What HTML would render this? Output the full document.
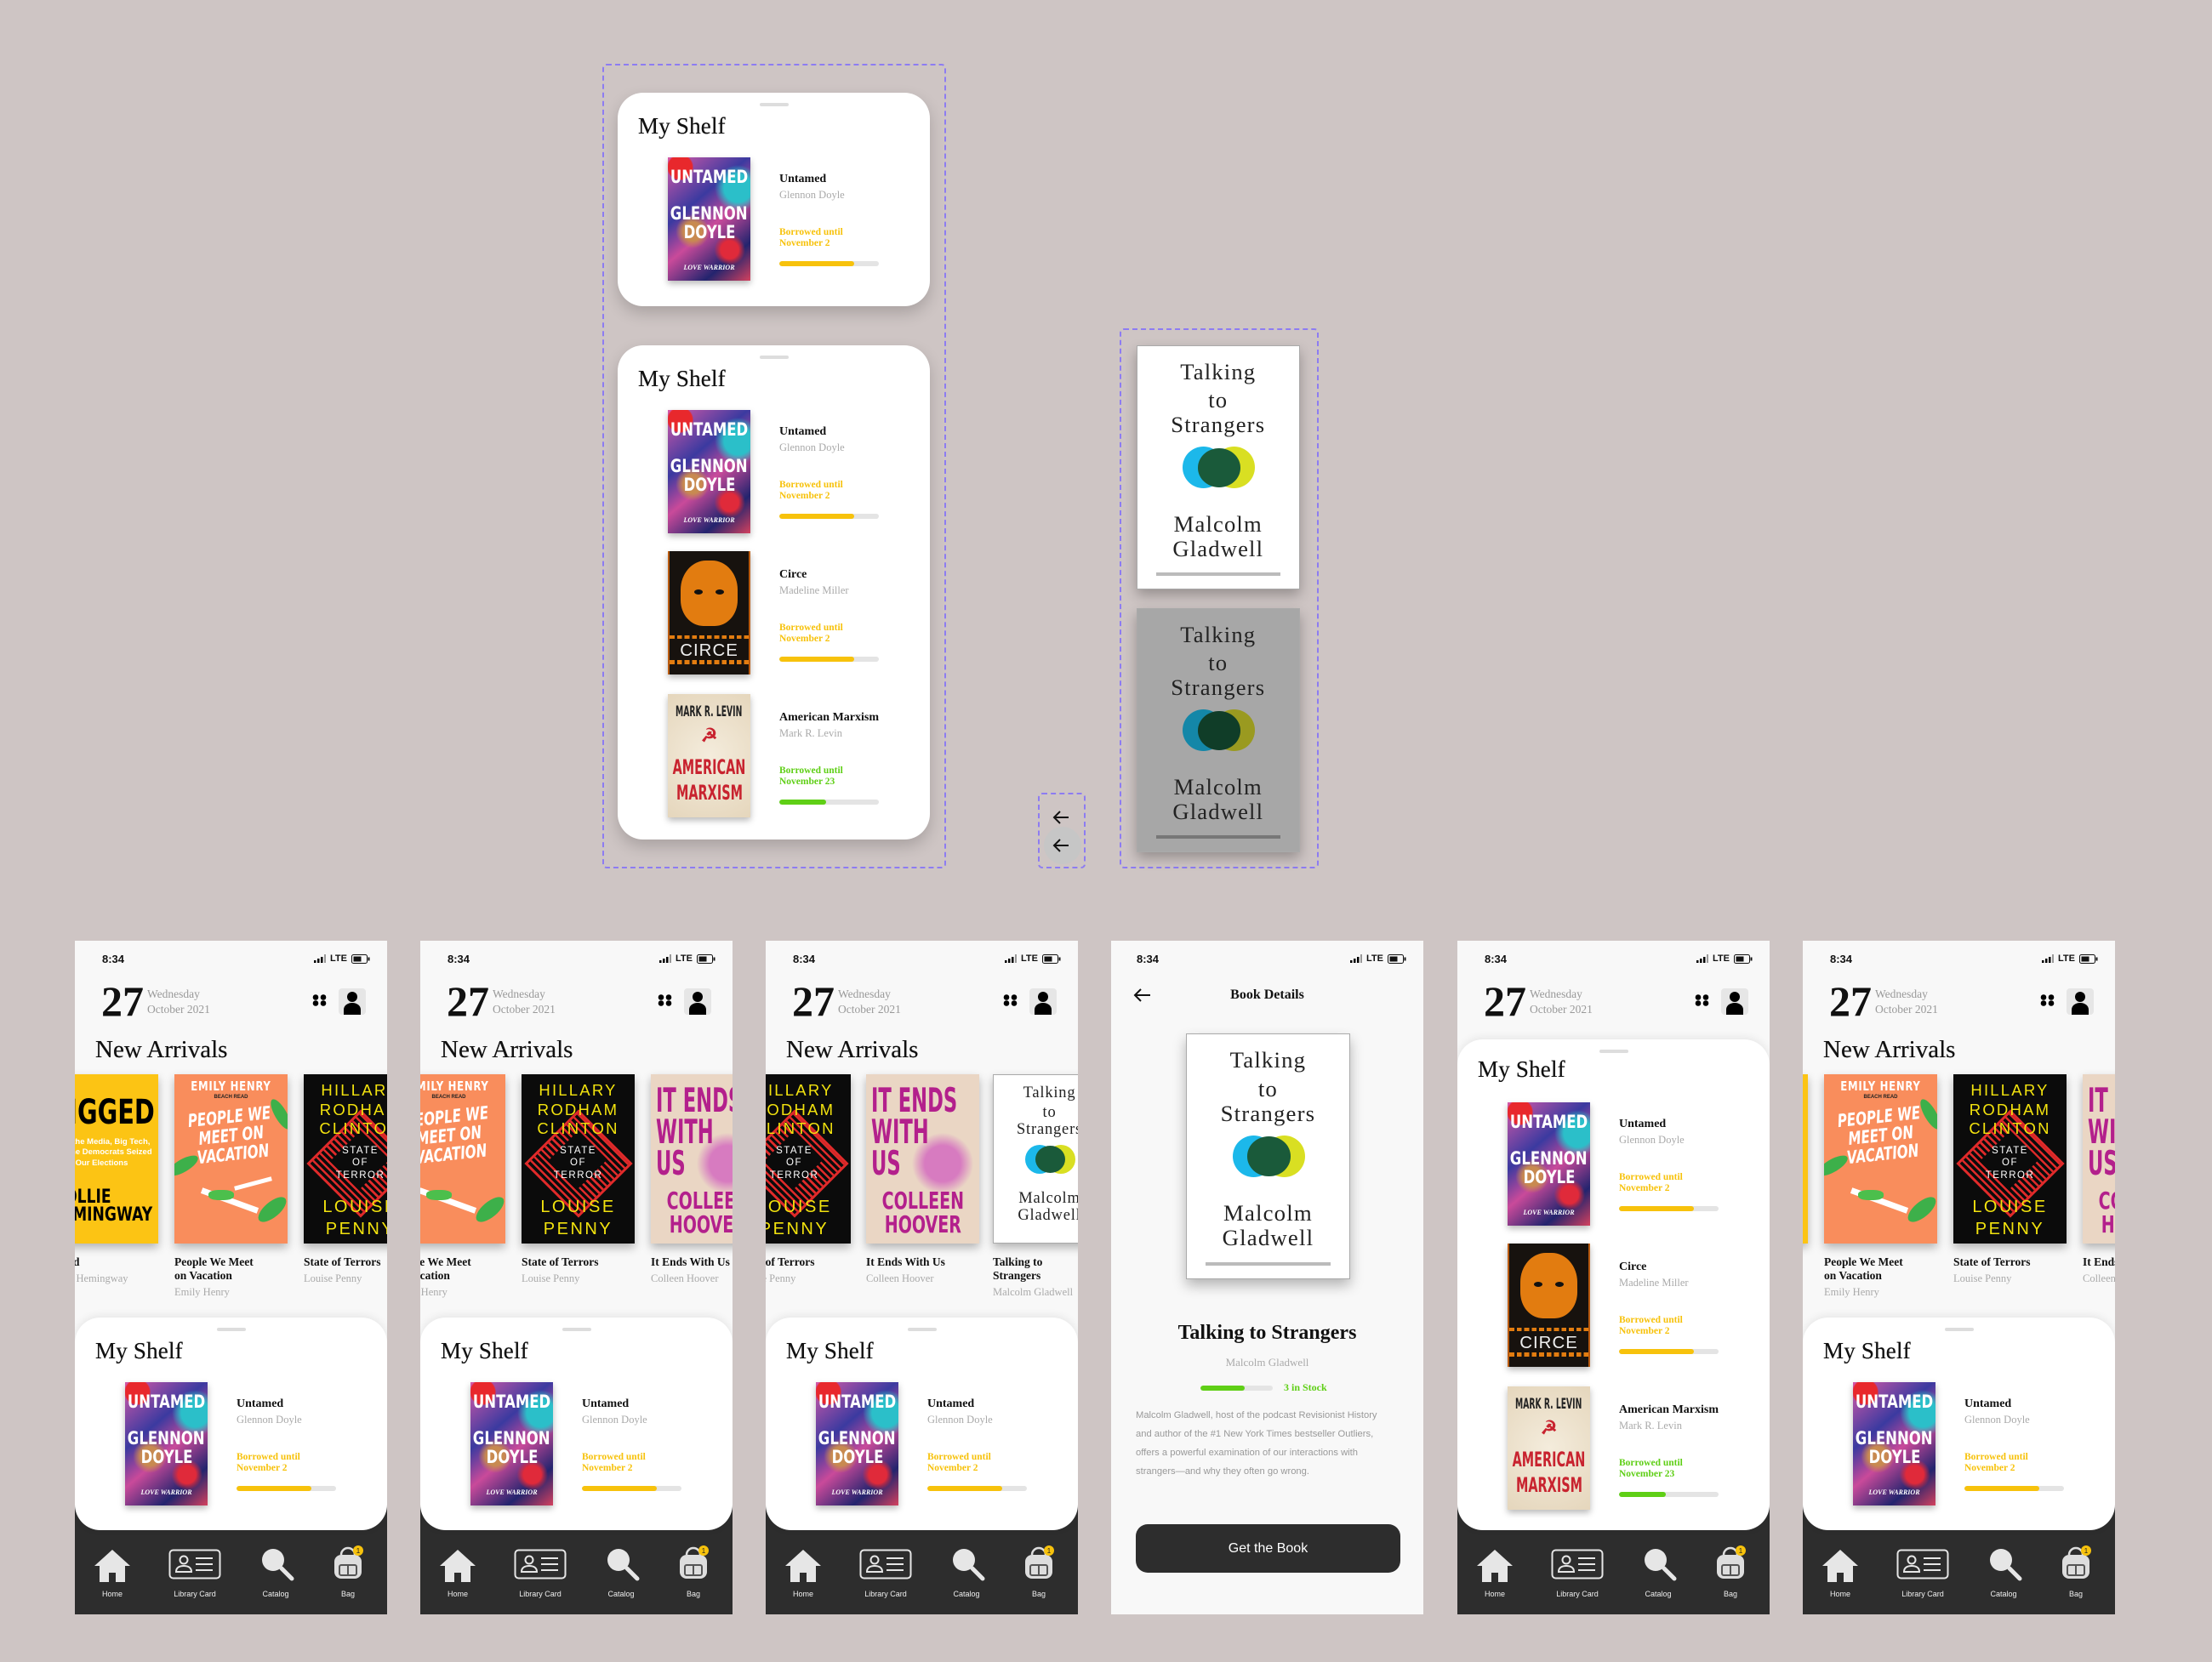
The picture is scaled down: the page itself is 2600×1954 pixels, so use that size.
<!DOCTYPE html>
<html><head><meta charset="utf-8"><style>
*{margin:0;padding:0;box-sizing:border-box}
body{width:2600px;height:1954px;background:#cec5c4;position:relative;overflow:hidden;font-family:"Liberation Serif",serif}
.abs{position:absolute}
.dash{position:absolute;border:2px dashed #8d7cf2;border-radius:5px}
.card{position:absolute;background:#fff;border-radius:30px;box-shadow:0 8px 18px rgba(0,0,0,.18);overflow:hidden}
.handle{position:absolute;top:12px;left:50%;margin-left:-17px;width:34px;height:4px;border-radius:2px;background:#ddd}
.h2{position:absolute;left:24px;font-size:27px;color:#111;top:24px;letter-spacing:.2px;text-shadow:0 0 .4px #111}
.st{position:absolute;left:190px;font-size:14px;font-weight:bold;color:#111}
.sa{position:absolute;left:190px;font-size:12.5px;color:#aaa}
.sb{position:absolute;left:190px;font-size:11.5px;line-height:12.5px;font-weight:bold;color:#f7c20c}
.sb.g{color:#5fcf16}
.bar{position:absolute;left:190px;width:117px;height:6px;border-radius:3px;background:#e4e4e4;overflow:hidden}
.bar i{display:block;height:100%;border-radius:3px;background:#f7c20c}
.bar.g i{background:#5fcf16}
.cv{position:absolute;width:13.3em;height:19.9em;overflow:hidden;box-shadow:0 .5em 1em rgba(0,0,0,.28)}
.cv div{position:absolute;left:0;right:0;text-align:center;white-space:nowrap;line-height:1}
.cv b{display:block}
.cv .cd{font-family:"DejaVu Sans","Liberation Sans",sans-serif;font-weight:bold;left:-60%;right:-60%}
.cv .cd b{display:inline-block;transform:scaleX(.78);transform-origin:center}
.cv .cd.l{left:.6em;right:auto;text-align:left}
.cv .cd.l b{transform-origin:left center}
.un{background:radial-gradient(circle at 15% 8%,#e8282c 0 9%,transparent 10%),radial-gradient(circle at 85% 25%,#2bbfc9 0 12%,transparent 20%),radial-gradient(circle at 30% 60%,#c88a50 0 10%,transparent 18%),radial-gradient(circle at 75% 75%,#e02a3a 0 8%,transparent 14%),linear-gradient(140deg,#d75aa8,#3b3aa0 35%,#c94a9a 55%,#23246e 80%,#d4415e)}
.un div{color:#fff}
.ci{background:#17120e;border-left:.4em solid #b85a10;border-right:.4em solid #b85a10}
.mx{background:radial-gradient(circle at 50% 50%,#f4ecdc,#e5d6bc)}
.pp{background:#f98d5c}
.hl{background:#0b0b0b}
.ie{background:#ead6c4}
.rg{background:#fcc414}
.tk{background:#fff;border:1px solid #aaa}
.tk div{font-family:"Liberation Serif",serif;color:#222;letter-spacing:.08em}
.phone{position:absolute;top:1106px;width:367px;height:792px;background:#f8f8f8;overflow:hidden}
.time{position:absolute;left:32px;top:14px;font:bold 13px "Liberation Sans",sans-serif;color:#111}
.sig{position:absolute;right:20px;top:15px;font:bold 11px "Liberation Sans",sans-serif;color:#111;display:flex;align-items:center;gap:5px}
.day{position:absolute;left:31px;top:42px;font-size:50px;font-weight:bold;color:#111}
.dt{position:absolute;left:85px;top:54px;font-size:13.5px;line-height:18px;color:#999}
.na{position:absolute;left:24px;top:112px;font-size:29px;color:#111;text-shadow:0 0 .4px #111}
.at{position:absolute;top:370px;font-size:13.5px;font-weight:bold;line-height:16px;color:#111;white-space:nowrap}
.at span{display:block;font-weight:normal;color:#aaa;font-size:12.5px;margin-top:3px}
.sheet{position:absolute;left:0;width:367px;background:#fff;border-radius:30px;box-shadow:0 -2px 10px rgba(0,0,0,.08)}
.nav{position:absolute;left:0;top:640px;width:367px;height:152px;background:#2d2d2d}
.nl{position:absolute;top:763px;font:9px "Liberation Sans",sans-serif;color:#eee;width:80px;margin-left:-40px;text-align:center}
</style></head><body>

<div class="dash" style="left:708px;top:75px;width:404px;height:946px"></div>
<div class="card" style="left:726px;top:109px;width:367px;height:251px">
 <div class="handle"></div><div class="h2">My Shelf</div>
 <div class="cv un" style="left:59px;top:76px;font-size:7.3px"><div class="cd" style="top:1.6em"><b style="font-size:2.9em">UNTAMED</b></div><div class="cd" style="top:7.6em"><b style="font-size:2.9em">GLENNON</b></div><div class="cd" style="top:10.5em"><b style="font-size:2.9em">DOYLE</b></div><div style="top:17.3em;font-style:italic"><b style="font-size:1.1em">LOVE WARRIOR</b></div></div>
 <div class="st" style="top:94px">Untamed</div><div class="sa" style="top:113px">Glennon Doyle</div>
 <div class="sb" style="top:158px">Borrowed until<br>November 2</div><div class="bar" style="top:198px"><i style="width:88px"></i></div>
</div>
<div class="card" style="left:726px;top:406px;width:367px;height:581px">
 <div class="handle"></div><div class="h2">My Shelf</div>
 <div class="cv un" style="left:59px;top:76px;font-size:7.3px"><div class="cd" style="top:1.6em"><b style="font-size:2.9em">UNTAMED</b></div><div class="cd" style="top:7.6em"><b style="font-size:2.9em">GLENNON</b></div><div class="cd" style="top:10.5em"><b style="font-size:2.9em">DOYLE</b></div><div style="top:17.3em;font-style:italic"><b style="font-size:1.1em">LOVE WARRIOR</b></div></div>
 <div class="st" style="top:94px">Untamed</div><div class="sa" style="top:113px">Glennon Doyle</div>
 <div class="sb" style="top:158px">Borrowed until<br>November 2</div><div class="bar" style="top:198px"><i style="width:88px"></i></div>

 <div class="cv ci" style="left:59px;top:242px;font-size:7.3px"><div style="top:1.5em;left:1.8em;right:1.8em;height:10.5em;background:#e27c10;border-radius:45% 45% 40% 40%"></div><div style="top:6.2em;left:4em;width:1.4em;height:.8em;background:#111;border-radius:50%"></div><div style="top:6.2em;left:7.4em;width:1.4em;height:.8em;background:#111;border-radius:50%"></div><div style="top:13.5em;height:.6em;background:repeating-linear-gradient(90deg,#e27c10 0 .8em,transparent .8em 1.2em)"></div><div style="top:14.6em;color:#eee;font-family:'Liberation Sans',sans-serif"><b style="font-size:2.8em;font-weight:normal;letter-spacing:.05em">CIRCE</b></div><div style="top:17.6em;height:.6em;background:repeating-linear-gradient(90deg,#e27c10 0 .8em,transparent .8em 1.2em)"></div></div>
 <div class="st" style="top:262px">Circe</div><div class="sa" style="top:281px">Madeline Miller</div>
 <div class="sb" style="top:326px">Borrowed until<br>November 2</div><div class="bar" style="top:366px"><i style="width:88px"></i></div>

 <div class="cv mx" style="left:59px;top:410px;font-size:7.3px"><div class="cd" style="top:1.6em;color:#222"><b style="font-size:2.3em;transform:scaleX(.55)">MARK R. LEVIN</b></div><div style="top:5.2em;color:#c8232f"><b style="font-size:3em">☭</b></div><div class="cd" style="top:10.2em;color:#c8232f"><b style="font-size:3.3em;transform:scaleX(.6)">AMERICAN</b></div><div class="cd" style="top:14.2em;color:#c8232f"><b style="font-size:3.3em;transform:scaleX(.6)">MARXISM</b></div></div>
 <div class="st" style="top:430px">American Marxism</div><div class="sa" style="top:449px">Mark R. Levin</div>
 <div class="sb g" style="top:494px">Borrowed until<br>November 23</div><div class="bar g" style="top:534px"><i style="width:55px"></i></div>
</div>

<div class="dash" style="left:1220px;top:932px;width:56px;height:89px"></div>
<div class="abs" style="left:1227px;top:972px;width:44px;height:44px;border-radius:50%;background:#c6c6c6"></div>
<svg class="abs" style="left:1236px;top:951px" width="22" height="20" viewBox="0 0 22 20"><path d="M20 10H3M10 3L3 10l7 7" fill="none" stroke="#111" stroke-width="2"/></svg>
<svg class="abs" style="left:1236px;top:984px" width="22" height="20" viewBox="0 0 22 20"><path d="M20 10H3M10 3L3 10l7 7" fill="none" stroke="#111" stroke-width="2"/></svg>

<div class="dash" style="left:1316px;top:386px;width:234px;height:635px"></div>
<div class="cv tk" style="left:1336px;top:406px;font-size:14.4px"><div style="top:1.2em"><b style="font-size:1.85em;font-weight:normal">Talking</b></div><div style="top:3.5em"><b style="font-size:1.85em;font-weight:normal">to</b></div><div style="top:5.5em"><b style="font-size:1.85em;font-weight:normal">Strangers</b></div><div style="top:8.2em;left:3.7em;width:3.4em;height:3.4em;border-radius:50%;background:#1cb8ea"></div><div style="top:8.2em;left:6.2em;width:3.4em;height:3.4em;border-radius:50%;background:#d9df22"></div><div style="top:8.3em;left:4.9em;width:3.5em;height:3.2em;border-radius:50%;background:#1a5a3a"></div><div style="top:13.6em"><b style="font-size:1.85em;font-weight:normal">Malcolm</b></div><div style="top:15.6em"><b style="font-size:1.85em;font-weight:normal">Gladwell</b></div><div style="top:18.5em;left:1.5em;right:1.5em;height:.25em;background:#bbb"></div></div>
<div class="cv tk" style="left:1336px;top:715px;font-size:14.4px;background:#a7a7a7"><div style="top:1.2em"><b style="font-size:1.85em;font-weight:normal">Talking</b></div><div style="top:3.5em"><b style="font-size:1.85em;font-weight:normal">to</b></div><div style="top:5.5em"><b style="font-size:1.85em;font-weight:normal">Strangers</b></div><div style="top:8.2em;left:3.7em;width:3.4em;height:3.4em;border-radius:50%;background:#1487a8"></div><div style="top:8.2em;left:6.2em;width:3.4em;height:3.4em;border-radius:50%;background:#9a9a20"></div><div style="top:8.3em;left:4.9em;width:3.5em;height:3.2em;border-radius:50%;background:#103d28"></div><div style="top:13.6em"><b style="font-size:1.85em;font-weight:normal">Malcolm</b></div><div style="top:15.6em"><b style="font-size:1.85em;font-weight:normal">Gladwell</b></div><div style="top:18.5em;left:1.5em;right:1.5em;height:.25em;background:#777"></div></div>

<!-- Phone 1 -->
<div class="phone" style="left:88px">
 <div class="time">8:34</div>
 <div class="sig"><svg width="14" height="10"><rect x="0" y="7" width="2.5" height="3"/><rect x="4" y="5" width="2.5" height="5"/><rect x="8" y="3" width="2.5" height="7"/><rect x="12" y="0" width="2" height="10" fill="#999"/></svg>LTE<svg width="22" height="11"><rect x=".5" y=".5" width="18" height="10" rx="2" fill="none" stroke="#111"/><rect x="2.5" y="2.5" width="9" height="6" fill="#111"/><rect x="19.5" y="3.5" width="2" height="4" fill="#111"/></svg></div>
 <div class="day">27</div><div class="dt">Wednesday<br>October 2021</div>
 <svg class="abs" style="left:279px;top:63px" width="17" height="14"><circle cx="4" cy="3.5" r="3.3"/><circle cx="13" cy="3.5" r="3.3"/><circle cx="4" cy="10.5" r="3.3"/><circle cx="13" cy="10.5" r="3.3"/></svg>
 <div class="abs" style="left:310px;top:56px;width:32px;height:31px;background:#e6e6e6;border-radius:4px"><svg width="32" height="31"><circle cx="16" cy="10" r="6"/><path d="M6 31v-6c0-5 5-8 10-8s10 3 10 8v6z"/></svg></div>
 <div class="na">New Arrivals</div>

 <div class="cv rg" style="left:-35px;top:157px;font-size:10px"><div class="cd" style="top:2.5em"><b style="font-size:4em;transform:scaleX(.72)">RIGGED</b></div><div style="top:7.4em;color:#fff;font-family:'Liberation Sans',sans-serif;line-height:1.3"><b style="font-size:.95em;font-weight:bold">How the Media, Big Tech,<br>and the Democrats Seized<br>Our Elections</b></div><div class="cd l" style="top:13.5em"><b style="font-size:2.2em;line-height:.95;transform:scaleX(.78)">MOLLIE<br>HEMINGWAY</b></div></div>
 <div class="at" style="left:-35px">Rigged<span>Mollie Hemingway</span></div>

 <div class="cv pp" style="left:117px;top:157px;font-size:10px"><div class="cd" style="top:.7em;color:#fff"><b style="font-size:1.5em;letter-spacing:.06em">EMILY HENRY</b></div><div style="top:2.4em;color:#222;font-family:'Liberation Sans',sans-serif"><b style="font-size:.6em">BEACH READ</b></div><div class="cd" style="top:3.9em;color:#fff;font-style:italic;line-height:1.05"><b style="font-size:2.1em;transform:rotate(-6deg) scaleX(.72)">PEOPLE WE<br>MEET ON<br>VACATION</b></div><div style="top:10em;left:-1em;width:4em;height:1.5em;background:#3db04a;border-radius:50%;transform:rotate(-30deg)"></div><div style="top:4em;left:10.5em;width:4em;height:1.4em;background:#3db04a;border-radius:50%;transform:rotate(60deg)"></div><div style="top:14.5em;left:3em;width:7em;height:.7em;background:#fff;transform:rotate(20deg)"></div><div style="top:13.6em;left:4em;width:3em;height:1.2em;background:#4cbf4c;border-radius:40%"></div><div style="top:12.6em;left:7em;width:4.5em;height:.5em;background:#fff;transform:rotate(-15deg)"></div><div style="top:15em;left:9.5em;width:4em;height:1.8em;background:#3db04a;border-radius:50%;transform:rotate(-40deg)"></div></div>
 <div class="at" style="left:117px">People We Meet<br>on Vacation<span>Emily Henry</span></div>

 <div class="cv hl" style="left:269px;top:157px;font-size:10px"><div style="top:6em;left:2.2em;width:9em;height:9em;transform:rotate(45deg);background:repeating-linear-gradient(0deg,transparent 0 .35em,#e02a2a .35em .6em);border:.3em solid #e02a2a"></div><div style="top:7.6em;left:4.3em;width:4.8em;height:4.8em;transform:rotate(45deg);background:#0b0b0b"></div><div style="top:.8em;color:#f2e20e;font-family:'Liberation Sans',sans-serif;line-height:1.22;letter-spacing:.22em"><b style="font-size:1.85em;font-weight:normal">HILLARY<br>RODHAM<br>CLINTON</b></div><div style="top:8.3em;color:#fff;font-family:'Liberation Sans',sans-serif;line-height:1.25;letter-spacing:.15em"><b style="font-size:1.15em;font-weight:normal">STATE<br>OF<br>TERROR</b></div><div style="top:14.3em;color:#f2e20e;font-family:'Liberation Sans',sans-serif;line-height:1.3;letter-spacing:.25em"><b style="font-size:2em;font-weight:normal">LOUISE<br>PENNY</b></div></div>
 <div class="at" style="left:269px">State of Terrors<span>Louise Penny</span></div>

 <div class="nav"></div>
 <div class="sheet" style="top:443px;height:250px">
  <div class="handle"></div><div class="h2">My Shelf</div>
  <div class="cv un" style="left:59px;top:76px;font-size:7.3px"><div class="cd" style="top:1.6em"><b style="font-size:2.9em">UNTAMED</b></div><div class="cd" style="top:7.6em"><b style="font-size:2.9em">GLENNON</b></div><div class="cd" style="top:10.5em"><b style="font-size:2.9em">DOYLE</b></div><div style="top:17.3em;font-style:italic"><b style="font-size:1.1em">LOVE WARRIOR</b></div></div>
  <div class="st" style="top:94px">Untamed</div><div class="sa" style="top:113px">Glennon Doyle</div>
  <div class="sb" style="top:158px">Borrowed until<br>November 2</div><div class="bar" style="top:198px"><i style="width:88px"></i></div>
 </div>
 <svg class="abs" style="left:21px;top:714px" width="46" height="42" viewBox="0 0 46 42"><path d="M23 2L2 21h6v19h11V29h8v11h11V21h6z" fill="#e6e6e6"/></svg>
 <svg class="abs" style="left:110px;top:715px" width="62" height="36" viewBox="0 0 62 36"><rect x="1.5" y="1.5" width="59" height="33" rx="4" fill="none" stroke="#e6e6e6" stroke-width="2"/><circle cx="18" cy="13" r="4.5" fill="none" stroke="#e6e6e6" stroke-width="2"/><path d="M9 27c0-5 4-7 9-7s9 2 9 7z" fill="none" stroke="#e6e6e6" stroke-width="2"/><path d="M32 11h20M32 18h20M32 25h20" stroke="#e6e6e6" stroke-width="2"/></svg>
 <svg class="abs" style="left:218px;top:713px" width="40" height="42" viewBox="0 0 40 42"><circle cx="15" cy="15" r="13" fill="#e6e6e6"/><path d="M25 25l12 12" stroke="#e6e6e6" stroke-width="5" stroke-linecap="round"/></svg>
 <svg class="abs" style="left:300px;top:710px" width="42" height="44" viewBox="0 0 42 44"><path d="M13 12a8 8 0 0 1 16 0" fill="none" stroke="#ddd" stroke-width="2.5"/><rect x="5" y="12" width="32" height="28" rx="8" fill="#ddd"/><rect x="11" y="24" width="20" height="12" rx="2" fill="none" stroke="#555" stroke-width="2"/><path d="M21 24v12" stroke="#555" stroke-width="2"/><circle cx="33" cy="7" r="6" fill="#f7c20c"/><text x="33" y="10" font-size="8" text-anchor="middle" font-family="Liberation Sans" fill="#222">1</text></svg>
 <div class="nl" style="left:44px">Home</div><div class="nl" style="left:141px">Library Card</div><div class="nl" style="left:236px">Catalog</div><div class="nl" style="left:321px">Bag</div>
</div>

<!-- Phone 2 -->
<div class="phone" style="left:494px">
 <div class="time">8:34</div>
 <div class="sig"><svg width="14" height="10"><rect x="0" y="7" width="2.5" height="3"/><rect x="4" y="5" width="2.5" height="5"/><rect x="8" y="3" width="2.5" height="7"/><rect x="12" y="0" width="2" height="10" fill="#999"/></svg>LTE<svg width="22" height="11"><rect x=".5" y=".5" width="18" height="10" rx="2" fill="none" stroke="#111"/><rect x="2.5" y="2.5" width="9" height="6" fill="#111"/><rect x="19.5" y="3.5" width="2" height="4" fill="#111"/></svg></div>
 <div class="day">27</div><div class="dt">Wednesday<br>October 2021</div>
 <svg class="abs" style="left:279px;top:63px" width="17" height="14"><circle cx="4" cy="3.5" r="3.3"/><circle cx="13" cy="3.5" r="3.3"/><circle cx="4" cy="10.5" r="3.3"/><circle cx="13" cy="10.5" r="3.3"/></svg>
 <div class="abs" style="left:310px;top:56px;width:32px;height:31px;background:#e6e6e6;border-radius:4px"><svg width="32" height="31"><circle cx="16" cy="10" r="6"/><path d="M6 31v-6c0-5 5-8 10-8s10 3 10 8v6z"/></svg></div>
 <div class="na">New Arrivals</div>

 <div class="cv pp" style="left:-33px;top:157px;font-size:10px"><div class="cd" style="top:.7em;color:#fff"><b style="font-size:1.5em;letter-spacing:.06em">EMILY HENRY</b></div><div style="top:2.4em;color:#222;font-family:'Liberation Sans',sans-serif"><b style="font-size:.6em">BEACH READ</b></div><div class="cd" style="top:3.9em;color:#fff;font-style:italic;line-height:1.05"><b style="font-size:2.1em;transform:rotate(-6deg) scaleX(.72)">PEOPLE WE<br>MEET ON<br>VACATION</b></div><div style="top:10em;left:-1em;width:4em;height:1.5em;background:#3db04a;border-radius:50%;transform:rotate(-30deg)"></div><div style="top:14.5em;left:3em;width:7em;height:.7em;background:#fff;transform:rotate(20deg)"></div><div style="top:13.6em;left:4em;width:3em;height:1.2em;background:#4cbf4c;border-radius:40%"></div><div style="top:15em;left:9.5em;width:4em;height:1.8em;background:#3db04a;border-radius:50%;transform:rotate(-40deg)"></div></div>
 <div class="at" style="left:-33px">People We Meet<br>on Vacation<span>Emily Henry</span></div>

 <div class="cv hl" style="left:119px;top:157px;font-size:10px"><div style="top:6em;left:2.2em;width:9em;height:9em;transform:rotate(45deg);background:repeating-linear-gradient(0deg,transparent 0 .35em,#e02a2a .35em .6em);border:.3em solid #e02a2a"></div><div style="top:7.6em;left:4.3em;width:4.8em;height:4.8em;transform:rotate(45deg);background:#0b0b0b"></div><div style="top:.8em;color:#f2e20e;font-family:'Liberation Sans',sans-serif;line-height:1.22;letter-spacing:.22em"><b style="font-size:1.85em;font-weight:normal">HILLARY<br>RODHAM<br>CLINTON</b></div><div style="top:8.3em;color:#fff;font-family:'Liberation Sans',sans-serif;line-height:1.25;letter-spacing:.15em"><b style="font-size:1.15em;font-weight:normal">STATE<br>OF<br>TERROR</b></div><div style="top:14.3em;color:#f2e20e;font-family:'Liberation Sans',sans-serif;line-height:1.3;letter-spacing:.25em"><b style="font-size:2em;font-weight:normal">LOUISE<br>PENNY</b></div></div>
 <div class="at" style="left:119px">State of Terrors<span>Louise Penny</span></div>

 <div class="cv ie" style="left:271px;top:157px;font-size:10px"><div style="top:6em;left:5em;width:8em;height:9em;background:radial-gradient(circle,#d77bc0 0 35%,transparent 60%)"></div><div class="cd l" style="top:1.3em;color:#b3208c;line-height:.95"><b style="font-size:3.9em;transform:scaleX(.58)">IT ENDS<br>WITH<br>US</b></div><div class="cd" style="top:13.5em;color:#b3208c;line-height:1"><b style="font-size:2.8em;transform:scaleX(.68)">COLLEEN<br>HOOVER</b></div></div>
 <div class="at" style="left:271px">It Ends With Us<span>Colleen Hoover</span></div>

 <div class="nav"></div>
 <div class="sheet" style="top:443px;height:250px">
  <div class="handle"></div><div class="h2">My Shelf</div>
  <div class="cv un" style="left:59px;top:76px;font-size:7.3px"><div class="cd" style="top:1.6em"><b style="font-size:2.9em">UNTAMED</b></div><div class="cd" style="top:7.6em"><b style="font-size:2.9em">GLENNON</b></div><div class="cd" style="top:10.5em"><b style="font-size:2.9em">DOYLE</b></div><div style="top:17.3em;font-style:italic"><b style="font-size:1.1em">LOVE WARRIOR</b></div></div>
  <div class="st" style="top:94px">Untamed</div><div class="sa" style="top:113px">Glennon Doyle</div>
  <div class="sb" style="top:158px">Borrowed until<br>November 2</div><div class="bar" style="top:198px"><i style="width:88px"></i></div>
 </div>
 <svg class="abs" style="left:21px;top:714px" width="46" height="42" viewBox="0 0 46 42"><path d="M23 2L2 21h6v19h11V29h8v11h11V21h6z" fill="#e6e6e6"/></svg>
 <svg class="abs" style="left:110px;top:715px" width="62" height="36" viewBox="0 0 62 36"><rect x="1.5" y="1.5" width="59" height="33" rx="4" fill="none" stroke="#e6e6e6" stroke-width="2"/><circle cx="18" cy="13" r="4.5" fill="none" stroke="#e6e6e6" stroke-width="2"/><path d="M9 27c0-5 4-7 9-7s9 2 9 7z" fill="none" stroke="#e6e6e6" stroke-width="2"/><path d="M32 11h20M32 18h20M32 25h20" stroke="#e6e6e6" stroke-width="2"/></svg>
 <svg class="abs" style="left:218px;top:713px" width="40" height="42" viewBox="0 0 40 42"><circle cx="15" cy="15" r="13" fill="#e6e6e6"/><path d="M25 25l12 12" stroke="#e6e6e6" stroke-width="5" stroke-linecap="round"/></svg>
 <svg class="abs" style="left:300px;top:710px" width="42" height="44" viewBox="0 0 42 44"><path d="M13 12a8 8 0 0 1 16 0" fill="none" stroke="#ddd" stroke-width="2.5"/><rect x="5" y="12" width="32" height="28" rx="8" fill="#ddd"/><rect x="11" y="24" width="20" height="12" rx="2" fill="none" stroke="#555" stroke-width="2"/><path d="M21 24v12" stroke="#555" stroke-width="2"/><circle cx="33" cy="7" r="6" fill="#f7c20c"/><text x="33" y="10" font-size="8" text-anchor="middle" font-family="Liberation Sans" fill="#222">1</text></svg>
 <div class="nl" style="left:44px">Home</div><div class="nl" style="left:141px">Library Card</div><div class="nl" style="left:236px">Catalog</div><div class="nl" style="left:321px">Bag</div>
</div>

<!-- Phone 3 -->
<div class="phone" style="left:900px">
 <div class="time">8:34</div>
 <div class="sig"><svg width="14" height="10"><rect x="0" y="7" width="2.5" height="3"/><rect x="4" y="5" width="2.5" height="5"/><rect x="8" y="3" width="2.5" height="7"/><rect x="12" y="0" width="2" height="10" fill="#999"/></svg>LTE<svg width="22" height="11"><rect x=".5" y=".5" width="18" height="10" rx="2" fill="none" stroke="#111"/><rect x="2.5" y="2.5" width="9" height="6" fill="#111"/><rect x="19.5" y="3.5" width="2" height="4" fill="#111"/></svg></div>
 <div class="day">27</div><div class="dt">Wednesday<br>October 2021</div>
 <svg class="abs" style="left:279px;top:63px" width="17" height="14"><circle cx="4" cy="3.5" r="3.3"/><circle cx="13" cy="3.5" r="3.3"/><circle cx="4" cy="10.5" r="3.3"/><circle cx="13" cy="10.5" r="3.3"/></svg>
 <div class="abs" style="left:310px;top:56px;width:32px;height:31px;background:#e6e6e6;border-radius:4px"><svg width="32" height="31"><circle cx="16" cy="10" r="6"/><path d="M6 31v-6c0-5 5-8 10-8s10 3 10 8v6z"/></svg></div>
 <div class="na">New Arrivals</div>

 <div class="cv hl" style="left:-33px;top:157px;font-size:10px"><div style="top:6em;left:2.2em;width:9em;height:9em;transform:rotate(45deg);background:repeating-linear-gradient(0deg,transparent 0 .35em,#e02a2a .35em .6em);border:.3em solid #e02a2a"></div><div style="top:7.6em;left:4.3em;width:4.8em;height:4.8em;transform:rotate(45deg);background:#0b0b0b"></div><div style="top:.8em;color:#f2e20e;font-family:'Liberation Sans',sans-serif;line-height:1.22;letter-spacing:.22em"><b style="font-size:1.85em;font-weight:normal">HILLARY<br>RODHAM<br>CLINTON</b></div><div style="top:8.3em;color:#fff;font-family:'Liberation Sans',sans-serif;line-height:1.25;letter-spacing:.15em"><b style="font-size:1.15em;font-weight:normal">STATE<br>OF<br>TERROR</b></div><div style="top:14.3em;color:#f2e20e;font-family:'Liberation Sans',sans-serif;line-height:1.3;letter-spacing:.25em"><b style="font-size:2em;font-weight:normal">LOUISE<br>PENNY</b></div></div>
 <div class="at" style="left:-33px">State of Terrors<span>Louise Penny</span></div>

 <div class="cv ie" style="left:118px;top:157px;font-size:10px"><div style="top:6em;left:5em;width:8em;height:9em;background:radial-gradient(circle,#d77bc0 0 35%,transparent 60%)"></div><div class="cd l" style="top:1.3em;color:#b3208c;line-height:.95"><b style="font-size:3.9em;transform:scaleX(.58)">IT ENDS<br>WITH<br>US</b></div><div class="cd" style="top:13.5em;color:#b3208c;line-height:1"><b style="font-size:2.8em;transform:scaleX(.68)">COLLEEN<br>HOOVER</b></div></div>
 <div class="at" style="left:118px">It Ends With Us<span>Colleen Hoover</span></div>

 <div class="cv tk" style="left:267px;top:157px;font-size:10px"><div style="top:1.2em"><b style="font-size:1.85em;font-weight:normal">Talking</b></div><div style="top:3.5em"><b style="font-size:1.85em;font-weight:normal">to</b></div><div style="top:5.5em"><b style="font-size:1.85em;font-weight:normal">Strangers</b></div><div style="top:8.2em;left:3.7em;width:3.4em;height:3.4em;border-radius:50%;background:#1cb8ea"></div><div style="top:8.2em;left:6.2em;width:3.4em;height:3.4em;border-radius:50%;background:#d9df22"></div><div style="top:8.3em;left:4.9em;width:3.5em;height:3.2em;border-radius:50%;background:#1a5a3a"></div><div style="top:13.6em"><b style="font-size:1.85em;font-weight:normal">Malcolm</b></div><div style="top:15.6em"><b style="font-size:1.85em;font-weight:normal">Gladwell</b></div></div>
 <div class="at" style="left:267px">Talking to<br>Strangers<span>Malcolm Gladwell</span></div>

 <div class="nav"></div>
 <div class="sheet" style="top:443px;height:250px">
  <div class="handle"></div><div class="h2">My Shelf</div>
  <div class="cv un" style="left:59px;top:76px;font-size:7.3px"><div class="cd" style="top:1.6em"><b style="font-size:2.9em">UNTAMED</b></div><div class="cd" style="top:7.6em"><b style="font-size:2.9em">GLENNON</b></div><div class="cd" style="top:10.5em"><b style="font-size:2.9em">DOYLE</b></div><div style="top:17.3em;font-style:italic"><b style="font-size:1.1em">LOVE WARRIOR</b></div></div>
  <div class="st" style="top:94px">Untamed</div><div class="sa" style="top:113px">Glennon Doyle</div>
  <div class="sb" style="top:158px">Borrowed until<br>November 2</div><div class="bar" style="top:198px"><i style="width:88px"></i></div>
 </div>
 <svg class="abs" style="left:21px;top:714px" width="46" height="42" viewBox="0 0 46 42"><path d="M23 2L2 21h6v19h11V29h8v11h11V21h6z" fill="#e6e6e6"/></svg>
 <svg class="abs" style="left:110px;top:715px" width="62" height="36" viewBox="0 0 62 36"><rect x="1.5" y="1.5" width="59" height="33" rx="4" fill="none" stroke="#e6e6e6" stroke-width="2"/><circle cx="18" cy="13" r="4.5" fill="none" stroke="#e6e6e6" stroke-width="2"/><path d="M9 27c0-5 4-7 9-7s9 2 9 7z" fill="none" stroke="#e6e6e6" stroke-width="2"/><path d="M32 11h20M32 18h20M32 25h20" stroke="#e6e6e6" stroke-width="2"/></svg>
 <svg class="abs" style="left:218px;top:713px" width="40" height="42" viewBox="0 0 40 42"><circle cx="15" cy="15" r="13" fill="#e6e6e6"/><path d="M25 25l12 12" stroke="#e6e6e6" stroke-width="5" stroke-linecap="round"/></svg>
 <svg class="abs" style="left:300px;top:710px" width="42" height="44" viewBox="0 0 42 44"><path d="M13 12a8 8 0 0 1 16 0" fill="none" stroke="#ddd" stroke-width="2.5"/><rect x="5" y="12" width="32" height="28" rx="8" fill="#ddd"/><rect x="11" y="24" width="20" height="12" rx="2" fill="none" stroke="#555" stroke-width="2"/><path d="M21 24v12" stroke="#555" stroke-width="2"/><circle cx="33" cy="7" r="6" fill="#f7c20c"/><text x="33" y="10" font-size="8" text-anchor="middle" font-family="Liberation Sans" fill="#222">1</text></svg>
 <div class="nl" style="left:44px">Home</div><div class="nl" style="left:141px">Library Card</div><div class="nl" style="left:236px">Catalog</div><div class="nl" style="left:321px">Bag</div>
</div>

<!-- Phone 4 -->
<div class="phone" style="left:1306px">
 <div class="time" style="left:30px">8:34</div>
 <div class="sig"><svg width="14" height="10"><rect x="0" y="7" width="2.5" height="3"/><rect x="4" y="5" width="2.5" height="5"/><rect x="8" y="3" width="2.5" height="7"/><rect x="12" y="0" width="2" height="10" fill="#999"/></svg>LTE<svg width="22" height="11"><rect x=".5" y=".5" width="18" height="10" rx="2" fill="none" stroke="#111"/><rect x="2.5" y="2.5" width="9" height="6" fill="#111"/><rect x="19.5" y="3.5" width="2" height="4" fill="#111"/></svg></div>
 <svg class="abs" style="left:26px;top:55px" width="22" height="18" viewBox="0 0 22 18"><path d="M20 9H3M9 2L2 9l7 7" fill="none" stroke="#111" stroke-width="2"/></svg>
 <div class="abs" style="left:0;width:367px;top:55px;text-align:center;font-size:16px;font-weight:bold;color:#111">Book Details</div>
 <div class="cv tk" style="left:88px;top:109px;font-size:14.5px"><div style="top:1.2em"><b style="font-size:1.85em;font-weight:normal">Talking</b></div><div style="top:3.5em"><b style="font-size:1.85em;font-weight:normal">to</b></div><div style="top:5.5em"><b style="font-size:1.85em;font-weight:normal">Strangers</b></div><div style="top:8.2em;left:3.7em;width:3.4em;height:3.4em;border-radius:50%;background:#1cb8ea"></div><div style="top:8.2em;left:6.2em;width:3.4em;height:3.4em;border-radius:50%;background:#d9df22"></div><div style="top:8.3em;left:4.9em;width:3.5em;height:3.2em;border-radius:50%;background:#1a5a3a"></div><div style="top:13.6em"><b style="font-size:1.85em;font-weight:normal">Malcolm</b></div><div style="top:15.6em"><b style="font-size:1.85em;font-weight:normal">Gladwell</b></div><div style="top:18.5em;left:1.5em;right:1.5em;height:.25em;background:#bbb"></div></div>
 <div class="abs" style="left:0;width:367px;top:448px;text-align:center;font-size:24px;font-weight:bold;color:#111">Talking to Strangers</div>
 <div class="abs" style="left:0;width:367px;top:488px;text-align:center;font-size:13px;color:#aaa">Malcolm Gladwell</div>
 <div class="bar" style="left:105px;top:523px;width:85px;height:6px"><i style="width:52px;background:#5fcf16"></i></div>
 <div class="abs" style="left:203px;top:518px;font-size:12px;font-weight:bold;color:#5fcf16">3 in Stock</div>
 <div class="abs" style="left:29px;top:547px;width:300px;font:11.2px/22px 'Liberation Sans',sans-serif;color:#999">Malcolm Gladwell, host of the podcast Revisionist History and author of the #1 New York Times bestseller Outliers, offers a powerful examination of our interactions with strangers—and why they often go wrong.</div>
 <div class="abs" style="left:29px;top:686px;width:311px;height:57px;border-radius:14px;background:#2d2d2d;color:#fff;font:16px/57px 'Liberation Sans',sans-serif;text-align:center">Get the Book</div>
</div>

<!-- Phone 5 -->
<div class="phone" style="left:1713px">
 <div class="time">8:34</div>
 <div class="sig"><svg width="14" height="10"><rect x="0" y="7" width="2.5" height="3"/><rect x="4" y="5" width="2.5" height="5"/><rect x="8" y="3" width="2.5" height="7"/><rect x="12" y="0" width="2" height="10" fill="#999"/></svg>LTE<svg width="22" height="11"><rect x=".5" y=".5" width="18" height="10" rx="2" fill="none" stroke="#111"/><rect x="2.5" y="2.5" width="9" height="6" fill="#111"/><rect x="19.5" y="3.5" width="2" height="4" fill="#111"/></svg></div>
 <div class="day">27</div><div class="dt">Wednesday<br>October 2021</div>
 <svg class="abs" style="left:279px;top:63px" width="17" height="14"><circle cx="4" cy="3.5" r="3.3"/><circle cx="13" cy="3.5" r="3.3"/><circle cx="4" cy="10.5" r="3.3"/><circle cx="13" cy="10.5" r="3.3"/></svg>
 <div class="abs" style="left:310px;top:56px;width:32px;height:31px;background:#e6e6e6;border-radius:4px"><svg width="32" height="31"><circle cx="16" cy="10" r="6"/><path d="M6 31v-6c0-5 5-8 10-8s10 3 10 8v6z"/></svg></div>
 <div class="nav"></div>
 <div class="sheet" style="top:116px;height:577px">
  <div class="handle"></div><div class="h2" style="top:20px">My Shelf</div>
  <div class="cv un" style="left:59px;top:74px;font-size:7.3px"><div class="cd" style="top:1.6em"><b style="font-size:2.9em">UNTAMED</b></div><div class="cd" style="top:7.6em"><b style="font-size:2.9em">GLENNON</b></div><div class="cd" style="top:10.5em"><b style="font-size:2.9em">DOYLE</b></div><div style="top:17.3em;font-style:italic"><b style="font-size:1.1em">LOVE WARRIOR</b></div></div>
  <div class="st" style="top:92px">Untamed</div><div class="sa" style="top:111px">Glennon Doyle</div>
  <div class="sb" style="top:156px">Borrowed until<br>November 2</div><div class="bar" style="top:196px"><i style="width:88px"></i></div>
  <div class="cv ci" style="left:59px;top:240px;font-size:7.3px"><div style="top:1.5em;left:1.8em;right:1.8em;height:10.5em;background:#e27c10;border-radius:45% 45% 40% 40%"></div><div style="top:6.2em;left:4em;width:1.4em;height:.8em;background:#111;border-radius:50%"></div><div style="top:6.2em;left:7.4em;width:1.4em;height:.8em;background:#111;border-radius:50%"></div><div style="top:13.5em;height:.6em;background:repeating-linear-gradient(90deg,#e27c10 0 .8em,transparent .8em 1.2em)"></div><div style="top:14.6em;color:#eee;font-family:'Liberation Sans',sans-serif"><b style="font-size:2.8em;font-weight:normal;letter-spacing:.05em">CIRCE</b></div><div style="top:17.6em;height:.6em;background:repeating-linear-gradient(90deg,#e27c10 0 .8em,transparent .8em 1.2em)"></div></div>
  <div class="st" style="top:260px">Circe</div><div class="sa" style="top:279px">Madeline Miller</div>
  <div class="sb" style="top:324px">Borrowed until<br>November 2</div><div class="bar" style="top:364px"><i style="width:88px"></i></div>
  <div class="cv mx" style="left:59px;top:408px;font-size:7.3px"><div class="cd" style="top:1.6em;color:#222"><b style="font-size:2.3em;transform:scaleX(.55)">MARK R. LEVIN</b></div><div style="top:5.2em;color:#c8232f"><b style="font-size:3em">☭</b></div><div class="cd" style="top:10.2em;color:#c8232f"><b style="font-size:3.3em;transform:scaleX(.6)">AMERICAN</b></div><div class="cd" style="top:14.2em;color:#c8232f"><b style="font-size:3.3em;transform:scaleX(.6)">MARXISM</b></div></div>
  <div class="st" style="top:428px">American Marxism</div><div class="sa" style="top:447px">Mark R. Levin</div>
  <div class="sb g" style="top:492px">Borrowed until<br>November 23</div><div class="bar g" style="top:532px"><i style="width:55px"></i></div>
 </div>
 <svg class="abs" style="left:21px;top:714px" width="46" height="42" viewBox="0 0 46 42"><path d="M23 2L2 21h6v19h11V29h8v11h11V21h6z" fill="#e6e6e6"/></svg>
 <svg class="abs" style="left:110px;top:715px" width="62" height="36" viewBox="0 0 62 36"><rect x="1.5" y="1.5" width="59" height="33" rx="4" fill="none" stroke="#e6e6e6" stroke-width="2"/><circle cx="18" cy="13" r="4.5" fill="none" stroke="#e6e6e6" stroke-width="2"/><path d="M9 27c0-5 4-7 9-7s9 2 9 7z" fill="none" stroke="#e6e6e6" stroke-width="2"/><path d="M32 11h20M32 18h20M32 25h20" stroke="#e6e6e6" stroke-width="2"/></svg>
 <svg class="abs" style="left:218px;top:713px" width="40" height="42" viewBox="0 0 40 42"><circle cx="15" cy="15" r="13" fill="#e6e6e6"/><path d="M25 25l12 12" stroke="#e6e6e6" stroke-width="5" stroke-linecap="round"/></svg>
 <svg class="abs" style="left:300px;top:710px" width="42" height="44" viewBox="0 0 42 44"><path d="M13 12a8 8 0 0 1 16 0" fill="none" stroke="#ddd" stroke-width="2.5"/><rect x="5" y="12" width="32" height="28" rx="8" fill="#ddd"/><rect x="11" y="24" width="20" height="12" rx="2" fill="none" stroke="#555" stroke-width="2"/><path d="M21 24v12" stroke="#555" stroke-width="2"/><circle cx="33" cy="7" r="6" fill="#f7c20c"/><text x="33" y="10" font-size="8" text-anchor="middle" font-family="Liberation Sans" fill="#222">1</text></svg>
 <div class="nl" style="left:44px">Home</div><div class="nl" style="left:141px">Library Card</div><div class="nl" style="left:236px">Catalog</div><div class="nl" style="left:321px">Bag</div>
</div>

<!-- Phone 6 -->
<div class="phone" style="left:2119px">
 <div class="time">8:34</div>
 <div class="sig"><svg width="14" height="10"><rect x="0" y="7" width="2.5" height="3"/><rect x="4" y="5" width="2.5" height="5"/><rect x="8" y="3" width="2.5" height="7"/><rect x="12" y="0" width="2" height="10" fill="#999"/></svg>LTE<svg width="22" height="11"><rect x=".5" y=".5" width="18" height="10" rx="2" fill="none" stroke="#111"/><rect x="2.5" y="2.5" width="9" height="6" fill="#111"/><rect x="19.5" y="3.5" width="2" height="4" fill="#111"/></svg></div>
 <div class="day">27</div><div class="dt">Wednesday<br>October 2021</div>
 <svg class="abs" style="left:279px;top:63px" width="17" height="14"><circle cx="4" cy="3.5" r="3.3"/><circle cx="13" cy="3.5" r="3.3"/><circle cx="4" cy="10.5" r="3.3"/><circle cx="13" cy="10.5" r="3.3"/></svg>
 <div class="abs" style="left:310px;top:56px;width:32px;height:31px;background:#e6e6e6;border-radius:4px"><svg width="32" height="31"><circle cx="16" cy="10" r="6"/><path d="M6 31v-6c0-5 5-8 10-8s10 3 10 8v6z"/></svg></div>
 <div class="na">New Arrivals</div>

 <div class="cv rg" style="left:-127px;top:157px;font-size:10px"></div>
 <div class="cv pp" style="left:25px;top:157px;font-size:10px"><div class="cd" style="top:.7em;color:#fff"><b style="font-size:1.5em;letter-spacing:.06em">EMILY HENRY</b></div><div style="top:2.4em;color:#222;font-family:'Liberation Sans',sans-serif"><b style="font-size:.6em">BEACH READ</b></div><div class="cd" style="top:3.9em;color:#fff;font-style:italic;line-height:1.05"><b style="font-size:2.1em;transform:rotate(-6deg) scaleX(.72)">PEOPLE WE<br>MEET ON<br>VACATION</b></div><div style="top:10em;left:-1em;width:4em;height:1.5em;background:#3db04a;border-radius:50%;transform:rotate(-30deg)"></div><div style="top:4em;left:10.5em;width:4em;height:1.4em;background:#3db04a;border-radius:50%;transform:rotate(60deg)"></div><div style="top:14.5em;left:3em;width:7em;height:.7em;background:#fff;transform:rotate(20deg)"></div><div style="top:13.6em;left:4em;width:3em;height:1.2em;background:#4cbf4c;border-radius:40%"></div><div style="top:15em;left:9.5em;width:4em;height:1.8em;background:#3db04a;border-radius:50%;transform:rotate(-40deg)"></div></div>
 <div class="at" style="left:25px">People We Meet<br>on Vacation<span>Emily Henry</span></div>

 <div class="cv hl" style="left:177px;top:157px;font-size:10px"><div style="top:6em;left:2.2em;width:9em;height:9em;transform:rotate(45deg);background:repeating-linear-gradient(0deg,transparent 0 .35em,#e02a2a .35em .6em);border:.3em solid #e02a2a"></div><div style="top:7.6em;left:4.3em;width:4.8em;height:4.8em;transform:rotate(45deg);background:#0b0b0b"></div><div style="top:.8em;color:#f2e20e;font-family:'Liberation Sans',sans-serif;line-height:1.22;letter-spacing:.22em"><b style="font-size:1.85em;font-weight:normal">HILLARY<br>RODHAM<br>CLINTON</b></div><div style="top:8.3em;color:#fff;font-family:'Liberation Sans',sans-serif;line-height:1.25;letter-spacing:.15em"><b style="font-size:1.15em;font-weight:normal">STATE<br>OF<br>TERROR</b></div><div style="top:14.3em;color:#f2e20e;font-family:'Liberation Sans',sans-serif;line-height:1.3;letter-spacing:.25em"><b style="font-size:2em;font-weight:normal">LOUISE<br>PENNY</b></div></div>
 <div class="at" style="left:177px">State of Terrors<span>Louise Penny</span></div>

 <div class="cv ie" style="left:329px;top:157px;font-size:10px"><div style="top:6em;left:5em;width:8em;height:9em;background:radial-gradient(circle,#d77bc0 0 35%,transparent 60%)"></div><div class="cd l" style="top:1.3em;color:#b3208c;line-height:.95"><b style="font-size:3.9em;transform:scaleX(.58)">IT ENDS<br>WITH<br>US</b></div><div class="cd" style="top:13.5em;color:#b3208c;line-height:1"><b style="font-size:2.8em;transform:scaleX(.68)">COLLEEN<br>HOOVER</b></div></div>
 <div class="at" style="left:329px">It Ends With Us<span>Colleen Hoover</span></div>

 <div class="nav"></div>
 <div class="sheet" style="top:443px;height:250px">
  <div class="handle"></div><div class="h2">My Shelf</div>
  <div class="cv un" style="left:59px;top:76px;font-size:7.3px"><div class="cd" style="top:1.6em"><b style="font-size:2.9em">UNTAMED</b></div><div class="cd" style="top:7.6em"><b style="font-size:2.9em">GLENNON</b></div><div class="cd" style="top:10.5em"><b style="font-size:2.9em">DOYLE</b></div><div style="top:17.3em;font-style:italic"><b style="font-size:1.1em">LOVE WARRIOR</b></div></div>
  <div class="st" style="top:94px">Untamed</div><div class="sa" style="top:113px">Glennon Doyle</div>
  <div class="sb" style="top:158px">Borrowed until<br>November 2</div><div class="bar" style="top:198px"><i style="width:88px"></i></div>
 </div>
 <svg class="abs" style="left:21px;top:714px" width="46" height="42" viewBox="0 0 46 42"><path d="M23 2L2 21h6v19h11V29h8v11h11V21h6z" fill="#e6e6e6"/></svg>
 <svg class="abs" style="left:110px;top:715px" width="62" height="36" viewBox="0 0 62 36"><rect x="1.5" y="1.5" width="59" height="33" rx="4" fill="none" stroke="#e6e6e6" stroke-width="2"/><circle cx="18" cy="13" r="4.5" fill="none" stroke="#e6e6e6" stroke-width="2"/><path d="M9 27c0-5 4-7 9-7s9 2 9 7z" fill="none" stroke="#e6e6e6" stroke-width="2"/><path d="M32 11h20M32 18h20M32 25h20" stroke="#e6e6e6" stroke-width="2"/></svg>
 <svg class="abs" style="left:218px;top:713px" width="40" height="42" viewBox="0 0 40 42"><circle cx="15" cy="15" r="13" fill="#e6e6e6"/><path d="M25 25l12 12" stroke="#e6e6e6" stroke-width="5" stroke-linecap="round"/></svg>
 <svg class="abs" style="left:300px;top:710px" width="42" height="44" viewBox="0 0 42 44"><path d="M13 12a8 8 0 0 1 16 0" fill="none" stroke="#ddd" stroke-width="2.5"/><rect x="5" y="12" width="32" height="28" rx="8" fill="#ddd"/><rect x="11" y="24" width="20" height="12" rx="2" fill="none" stroke="#555" stroke-width="2"/><path d="M21 24v12" stroke="#555" stroke-width="2"/><circle cx="33" cy="7" r="6" fill="#f7c20c"/><text x="33" y="10" font-size="8" text-anchor="middle" font-family="Liberation Sans" fill="#222">1</text></svg>
 <div class="nl" style="left:44px">Home</div><div class="nl" style="left:141px">Library Card</div><div class="nl" style="left:236px">Catalog</div><div class="nl" style="left:321px">Bag</div>
</div>

</body></html>
